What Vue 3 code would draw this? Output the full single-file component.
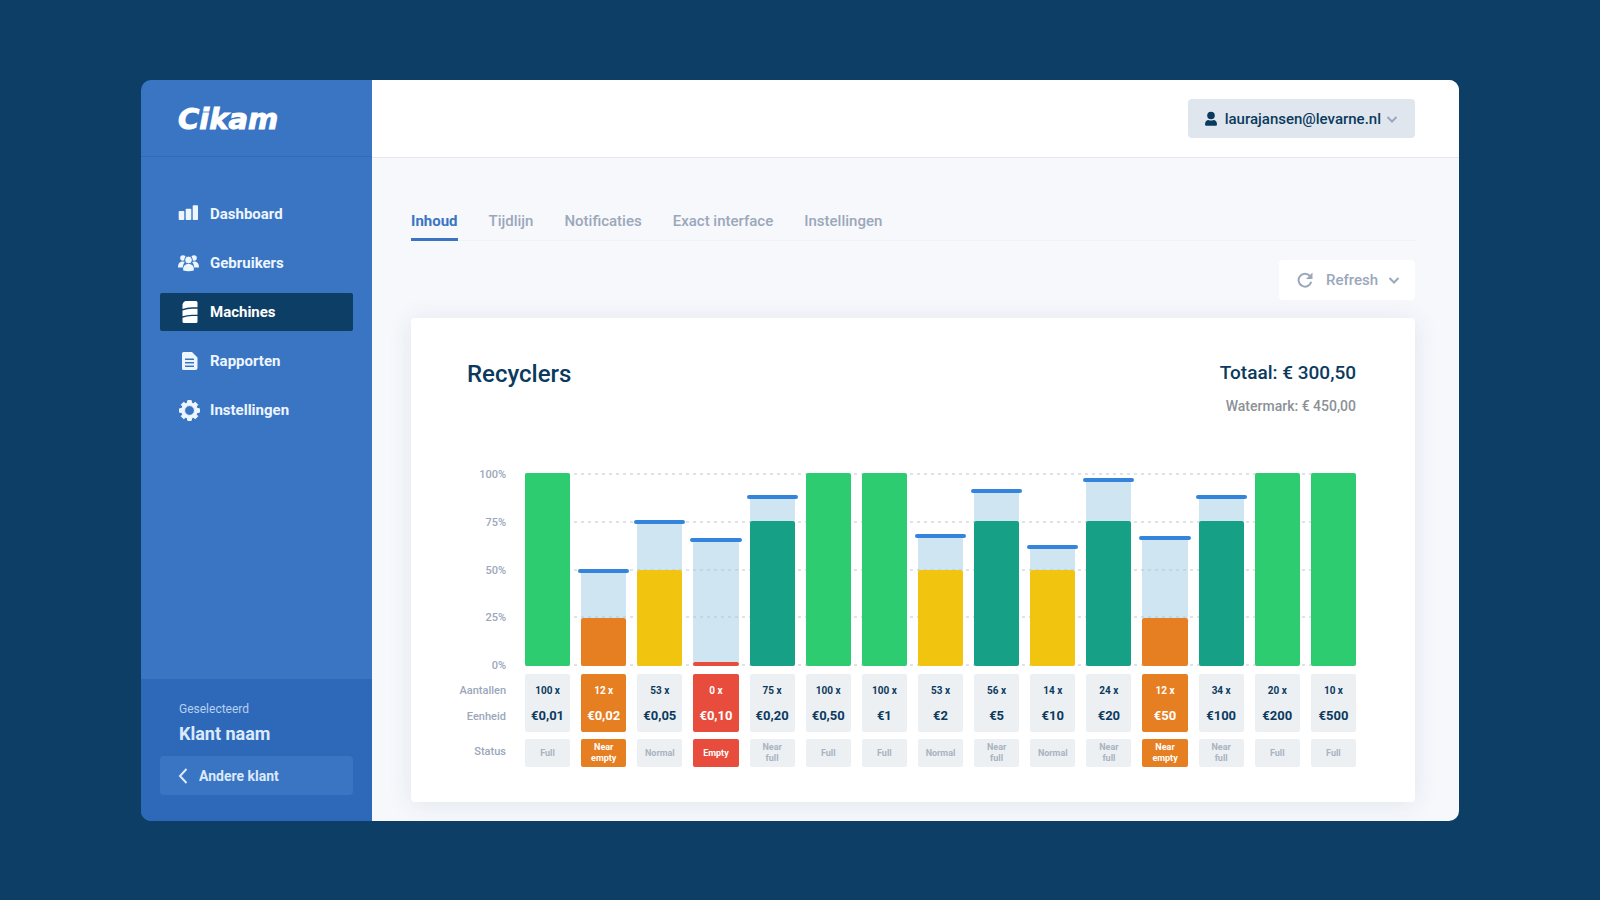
<template>
  <div class="page">
    <div class="window">
      <!-- Sidebar -->
      <aside class="sidebar">
        <a href="#" class="logo">Cikam</a>

        <nav class="menu">
          <a
            v-for="item in menu"
            :key="item.label"
            href="#"
            class="menu-item"
            :class="{ active: item.active }"
          >
            <svg class="menu-icon" viewBox="0 0 22 22" aria-hidden="true">
              <template v-if="item.icon === 'bars'">
                <rect x="0.7" y="8" width="5.600" height="9" rx="0.8" />
                <rect x="7.700" y="5.700" width="5.600" height="11.300" rx="0.8" />
                <rect x="14.700" y="2.300" width="5.300" height="14.700" rx="0.8" />
              </template>
              <template v-else-if="item.icon === 'users'">
                <circle cx="5" cy="6" r="2.8" />
                <circle cx="16" cy="6" r="2.8" />
                <path d="M0 15.500c0-3.600 1.500-6 4.500-6 1 0 1.800.3 2.300.8-1.200 1.300-1.800 3-2 5.200zM21 15.500c0-3.600-1.500-6-4.500-6-1 0-1.800.3-2.300.8 1.200 1.300 1.800 3 2 5.200z" />
                <circle cx="10.500" cy="8" r="3.900" class="cutout" />
                <path d="M5.200 18.500c-.6-4 1.500-6.500 5.300-6.500s5.900 2.500 5.300 6.500c-3 1-7.600 1-10.600 0z" />
              </template>
              <template v-else-if="item.icon === 'machine'">
                <path d="M7.500 0h10.500q1.500 0 1.500 1.500V6.300h-5.500q-5 0-9.500 1.700V3.200Q5.500.6 7.500 0z" />
                <path d="M4.500 9.600q4.500-1.900 9.500-1.900h5.500v6h-5.500q-5 0-9.500 1.500z" />
                <path d="M4.500 16.800q4.500-1.700 9.500-1.700h5.500v5.400q0 1.500-1.500 1.500H6q-1.500 0-1.500-1.500z" />
              </template>
              <template v-else-if="item.icon === 'file'">
                <path fill-rule="evenodd" d="M5.500 2h8.500l5.500 5.500V18q0 2-2 2h-12q-1.500 0-1.500-1.500v-15Q4 2 5.500 2zM7 8.500V10h9V8.500zM7 12v1.500h9V12zM7 15.500V17h9v-1.500z" />
              </template>
              <template v-else>
                <path
                  class="gear"
                  fill-rule="evenodd"
                  d="M9.800 1.500h3.400l.5 2.500 1.500.7 2.200-1.400 2.300 2.300-1.400 2.200.7 1.500 2.500.5v3.400l-2.500.5-.7 1.500 1.400 2.200-2.300 2.300-2.200-1.400-1.500.7-.5 2.500H9.800l-.5-2.500-1.500-.7-2.200 1.400-2.300-2.300 1.400-2.200-.7-1.500-2.500-.5V9.800L4 9.300l.7-1.500-1.400-2.200 2.300-2.300 2.200 1.400L9.300 4zM11.500 6.600a4.900 4.900 0 1 0 0 9.800 4.900 4.900 0 0 0 0-9.800z"
                />
              </template>
            </svg>
            <span>{{ item.label }}</span>
          </a>
        </nav>

        <div class="client">
          <p class="client-caption">Geselecteerd</p>
          <p class="client-name">Klant naam</p>
          <button type="button" class="client-switch">
            <svg class="back-icon" viewBox="0 0 10 16" aria-hidden="true">
              <path d="M8.500 1L2 8l6.500 7" />
            </svg>
            Andere klant
          </button>
        </div>
      </aside>

      <!-- Main -->
      <div class="main">
        <header class="topbar">
          <button type="button" class="user">
            <svg class="user-icon" viewBox="0 0 14 16" aria-hidden="true">
              <circle cx="7" cy="4.500" r="3.800" />
              <path d="M1 13.500C1 10.500 2.500 9 4.500 9q2.500 1 5 0c2 0 3.500 1.500 3.500 4.500q0 1.300-1.300 1.300H2.300Q1 14.800 1 13.500z" />
            </svg>
            laurajansen@levarne.nl
            <svg class="chevron" viewBox="0 0 12 12" aria-hidden="true">
              <path d="M1.500 4L6 8.500 10.500 4" />
            </svg>
          </button>
        </header>

        <main class="content">
          <nav class="tabs">
            <a
              v-for="(tab, i) in tabs"
              :key="tab"
              href="#"
              class="tab"
              :class="{ active: i === 0 }"
            >{{ tab }}</a>
          </nav>

          <div class="actions">
            <button type="button" class="refresh">
              <svg class="refresh-icon" viewBox="0 0 16 16" aria-hidden="true">
                <path class="arc" d="M13 4.200A6.400 6.400 0 1 0 14.200 9.800" />
                <path class="head" d="M15.500 0.500v6.500H9z" />
              </svg>
              Refresh
              <svg class="chevron" viewBox="0 0 12 12" aria-hidden="true">
                <path d="M1.500 4L6 8.500 10.500 4" />
              </svg>
            </button>
          </div>

          <section class="card">
            <div class="card-head">
              <h1 class="card-title">Recyclers</h1>
              <div class="totals">
                <p class="total">Totaal: € 300,50</p>
                <p class="watermark">Watermark: € 450,00</p>
              </div>
            </div>

            <!-- Bar chart -->
            <div class="plot">
              <div class="lines">
                <div class="line" v-for="step in steps" :key="step"></div>
              </div>
              <div class="axis">
                <span class="tick" v-for="step in steps" :key="step">{{ step }}%</span>
              </div>
              <div class="column" v-for="r in recyclers" :key="r.unit">
                <template v-if="r.mark">
                  <div class="marker"></div>
                  <div class="level" :style="{ height: r.mark - r.fill + '%' }"></div>
                </template>
                <div class="fill" :class="r.color" :style="{ height: r.fill + '%' }"></div>
              </div>
            </div>

            <!-- Values per unit -->
            <table class="values">
              <tbody>
                <tr>
                  <th scope="row" class="first">Aantallen</th>
                  <td v-for="r in recyclers" :key="r.unit" class="amount" :class="alert(r)">{{ r.amount }} x</td>
                </tr>
                <tr>
                  <th scope="row">Eenheid</th>
                  <td v-for="r in recyclers" :key="r.unit" class="unit" :class="alert(r)">€{{ r.unit }}</td>
                </tr>
                <tr class="status-row">
                  <th scope="row">Status</th>
                  <td v-for="r in recyclers" :key="r.unit" class="status" :class="alert(r)">{{ r.status }}</td>
                </tr>
              </tbody>
            </table>
          </section>
        </main>
      </div>
    </div>
  </div>
</template>

<script setup>
const menu = [
  { label: 'Dashboard', icon: 'bars' },
  { label: 'Gebruikers', icon: 'users' },
  { label: 'Machines', icon: 'machine', active: true },
  { label: 'Rapporten', icon: 'file' },
  { label: 'Instellingen', icon: 'gear' }
]

const tabs = ['Inhoud', 'Tijdlijn', 'Notificaties', 'Exact interface', 'Instellingen']

const steps = [100, 75, 50, 25, 0]

// fill: current level, mark: watermark level (both in %)
const recyclers = [
  { unit: '0,01', amount: 100, status: 'Full', color: 'green', fill: 100 },
  { unit: '0,02', amount: 12, status: 'Near empty', color: 'orange', fill: 25, mark: 50 },
  { unit: '0,05', amount: 53, status: 'Normal', color: 'yellow', fill: 50, mark: 75 },
  { unit: '0,10', amount: 0, status: 'Empty', color: 'red', fill: 2, mark: 66 },
  { unit: '0,20', amount: 75, status: 'Near full', color: 'teal', fill: 75, mark: 88 },
  { unit: '0,50', amount: 100, status: 'Full', color: 'green', fill: 100 },
  { unit: '1', amount: 100, status: 'Full', color: 'green', fill: 100 },
  { unit: '2', amount: 53, status: 'Normal', color: 'yellow', fill: 50, mark: 68 },
  { unit: '5', amount: 56, status: 'Near full', color: 'teal', fill: 75, mark: 91 },
  { unit: '10', amount: 14, status: 'Normal', color: 'yellow', fill: 50, mark: 62 },
  { unit: '20', amount: 24, status: 'Near full', color: 'teal', fill: 75, mark: 97 },
  { unit: '50', amount: 12, status: 'Near empty', color: 'orange', fill: 25, mark: 67 },
  { unit: '100', amount: 34, status: 'Near full', color: 'teal', fill: 75, mark: 88 },
  { unit: '200', amount: 20, status: 'Full', color: 'green', fill: 100 },
  { unit: '500', amount: 10, status: 'Full', color: 'green', fill: 100 }
]

// Only (nearly) empty recyclers get a coloured cell
const alert = (r) => (['orange', 'red'].includes(r.color) ? ['alert', r.color] : '')
</script>

<style>
body {
  background: #0d3e66;
}
</style>

<style scoped>
.page {
  box-sizing: border-box;
  display: flex;
  min-height: 100vh;
  padding: 80px 141px 79px;
  background: #0d3e66;
  color: #0b3a5e;
  font-family: Roboto, "Liberation Sans", sans-serif;
}

.page *,
.page *::before {
  box-sizing: border-box;
}

p,
h1 {
  margin: 0;
}

a {
  text-decoration: none;
}

button {
  display: flex;
  align-items: center;
  border: 0;
  font-family: inherit;
  cursor: pointer;
}

.window {
  display: flex;
  flex: 1;
  border-radius: 10px;
  overflow: hidden;
}

/* Sidebar */
.sidebar {
  display: flex;
  flex-direction: column;
  width: 231px;
  flex-shrink: 0;
  background: #3a75c4;
}

.logo {
  height: 77px;
  padding-left: 37px;
  border-bottom: 1px solid #316abb;
  color: #fff;
  font-family: "DejaVu Sans", sans-serif;
  font-size: 29px;
  font-style: italic;
  font-weight: 700;
  line-height: 78px;
  -webkit-text-stroke: 1px #fff;
}

.menu {
  display: flex;
  flex-direction: column;
  gap: 11px;
  padding: 38px 19px;
}

.menu-item {
  display: flex;
  align-items: center;
  gap: 10px;
  height: 38px;
  padding-left: 18px;
  border-radius: 2px;
  color: #edf5ff;
  font-size: 15px;
  font-weight: 700;
}

.menu-item.active {
  background: #0d3e66;
  color: #fff;
}

.menu-icon {
  width: 22px;
  height: 22px;
  fill: currentColor;
}

.cutout {
  stroke: #3a75c4;
  stroke-width: 1;
}

.gear {
  stroke: currentColor;
  stroke-width: 1;
  stroke-linejoin: round;
}

.client {
  margin-top: auto;
  height: 142px;
  padding: 22px 19px 0;
  background: #2e69b9;
  color: #dbe9fb;
}

.client-caption {
  padding-left: 19px;
  color: #b5d0f2;
  font-size: 12px;
  line-height: 16px;
}

.client-name {
  padding-left: 19px;
  font-size: 18px;
  font-weight: 700;
  line-height: 34px;
}

.client-switch {
  gap: 11px;
  width: 100%;
  height: 39px;
  margin-top: 5px;
  padding: 0 18px;
  border-radius: 4px;
  background: #3a75c4;
  color: #dbe9fb;
  font-size: 14px;
  font-weight: 700;
}

.back-icon {
  width: 10px;
  height: 16px;
  fill: none;
  stroke: currentColor;
  stroke-width: 2;
}

/* Main */
.main {
  flex: 1;
  min-width: 0;
  background: #f6f8fc;
}

.topbar {
  display: flex;
  align-items: center;
  justify-content: flex-end;
  height: 78px;
  padding: 0 44px;
  border-bottom: 1px solid #e4e7eb;
  background: #fff;
}

.user {
  height: 39px;
  padding: 0 17px 0 16px;
  border-radius: 4px;
  background: #e0e6ed;
  color: #0b3a5e;
  font-size: 15px;
  font-weight: 500;
}

.user-icon {
  width: 14px;
  height: 16px;
  margin-right: 7px;
  fill: currentColor;
}

.chevron {
  width: 12px;
  height: 12px;
  fill: none;
  stroke: #9ba7bb;
  stroke-width: 2;
}

.user .chevron {
  margin-left: 5px;
}

.content {
  padding: 52px 44px 19px 39px;
}

.tabs {
  display: flex;
  gap: 31px;
  box-shadow: inset 0 -1px 0 #eef1f5;
}

.tab {
  padding-bottom: 6px;
  border-bottom: 3px solid transparent;
  color: #9ba7bb;
  font-size: 15px;
  font-weight: 500;
  line-height: 22px;
}

.tab.active {
  border-color: #3a75c4;
  color: #3a75c4;
  font-weight: 700;
}

.actions {
  display: flex;
  justify-content: flex-end;
  margin: 19px 0 18px;
}

.refresh {
  height: 40px;
  padding: 0 15px 0 18px;
  border-radius: 4px;
  background: #fff;
  color: #9ba7bb;
  font-size: 15px;
  font-weight: 500;
}

.refresh-icon {
  width: 16px;
  height: 16px;
  margin-right: 13px;
}

.arc {
  fill: none;
  stroke: currentColor;
  stroke-width: 2;
}

.head {
  fill: currentColor;
}

.refresh .chevron {
  margin-left: 10px;
}

/* Card */
.card {
  padding: 41px 59px 35px 44px;
  border-radius: 4px;
  background: #fff;
  box-shadow: 0 2px 24px rgba(40, 60, 90, 0.1);
}

.card-head {
  display: flex;
  justify-content: space-between;
  padding-left: 12px;
}

.card-title {
  font-size: 24px;
  font-weight: 500;
  line-height: 30px;
}

.totals {
  text-align: right;
}

.total {
  font-size: 19px;
  font-weight: 500;
  line-height: 28px;
}

.watermark {
  margin-top: 9px;
  color: #8c9197;
  font-size: 14px;
  font-weight: 500;
  line-height: 20px;
}

/* The plot and the table rows share one column grid */
.plot,
.values tr {
  display: grid;
  grid-template-columns: 59px repeat(15, minmax(0, 1fr));
  column-gap: 11px;
}

.plot {
  position: relative;
  height: 193px;
  margin-top: 57px;
}

.lines {
  position: absolute;
  inset: 0 0 0 70px;
  display: flex;
  flex-direction: column;
  justify-content: space-between;
}

.line {
  height: 2px;
  background: repeating-linear-gradient(90deg, #dfe2e6 0 3px, transparent 3px 7px);
}

.axis {
  display: flex;
  flex-direction: column;
  justify-content: space-between;
  padding-right: 8px;
  color: #9ba7bb;
  font-size: 11px;
  font-weight: 500;
  text-align: right;
}

.tick {
  height: 2px;
  line-height: 3px;
}

.column {
  position: relative;
  display: flex;
  flex-direction: column;
  justify-content: flex-end;
}

.marker {
  z-index: 1;
  height: 4px;
  margin: 0 -3px -3px;
  border-radius: 2px;
  background: #3584dc;
}

.level {
  background: rgba(160, 206, 230, 0.5);
}

.fill {
  border-radius: 2px;
}

.green {
  background: #2ecc71;
}

.teal {
  background: #16a085;
}

.yellow {
  background: #f1c40f;
}

.orange {
  background: #e67e22;
}

.red {
  background: #e74c3c;
}

/* Values */
.values {
  display: block;
  margin-top: 8px;
}

.values tbody {
  display: block;
}

.values th {
  padding: 0 8px 0 0;
  color: #9ba7bb;
  font-size: 11px;
  font-weight: 500;
  line-height: 26px;
  text-align: right;
}

.values .first {
  padding-top: 4px;
}

.values td {
  padding: 0;
  font-weight: 700;
  text-align: center;
}

.values td:not(.alert) {
  background: #edf0f3;
}

.values td.alert {
  color: #fff;
}

.values .amount {
  padding-top: 4px;
  border-radius: 2px 2px 0 0;
  font-size: 10px;
  line-height: 26px;
}

.values .unit {
  padding-bottom: 4px;
  border-radius: 0 0 2px 2px;
  font-size: 13px;
  line-height: 24px;
}

.values .status-row {
  margin-top: 7px;
}

.values .status {
  display: flex;
  align-items: center;
  justify-content: center;
  height: 28px;
  padding: 0 6px;
  border-radius: 2px;
  color: #a9b3c1;
  font-size: 9px;
  line-height: 11px;
}

.values .status.alert {
  color: #fff;
}
</style>
